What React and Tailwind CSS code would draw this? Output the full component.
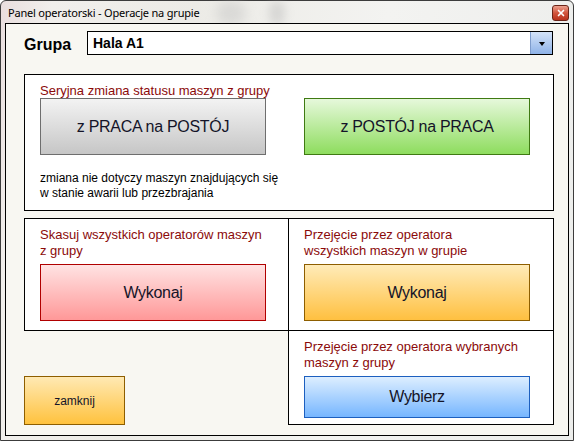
import { X } from 'lucide-react';

function GradButton({ className, children }) {
  return (
    <div className={`flex items-center justify-center border text-[16px] tracking-[-0.3px] text-[#141428] ${className}`}>
      {children}
    </div>
  );
}

export default function App() {
  return (
    <div className="h-[441px] w-[574px] overflow-hidden font-['Liberation_Sans',Arial,sans-serif]">
      <div className="relative flex h-[441px] w-[574px] flex-col rounded-t-[6px] border border-[#3c3c3c] bg-[linear-gradient(100deg,#e9dede_0%,#f1efec_8%,#ecebe6_30%,#f3f3f1_60%,#ecedeb_100%)]">
        <div className="pointer-events-none absolute left-[215px] top-0 h-[24px] w-[30px] rounded-full bg-[#bdbdbd] opacity-40 blur-[6px]" />
        <div className="pointer-events-none absolute left-[268px] top-0 h-[24px] w-[16px] rounded-full bg-[#b4b4b4] opacity-40 blur-[5px]" />
        <div className="relative flex h-[22px] items-start justify-between pl-[7px] pr-[4px]">
          <span className="pt-[5px] font-['Noto_Sans',sans-serif] text-[11px] tracking-[-0.2px] leading-[14px] text-black">
            Panel operatorski - Operacje na grupie
          </span>
          <div className="mt-[4px] flex h-[16px] w-[17px] items-center justify-center rounded-[3px] border border-[#6b2418] bg-[linear-gradient(#eba08f,#d2543c_50%,#b8311c)]">
            <X className="h-[10px] w-[10px] text-white" strokeWidth={4} />
          </div>
        </div>
        <div className="relative mx-[4px] flex h-[413px] w-[564px] flex-col border border-black bg-[#f8f7f2] pl-[18px] pt-[7px]">
          <div className="flex h-[24px] items-center">
            <span className="w-[63px] pt-[3px] text-[16px] font-bold leading-[18px] text-black">Grupa</span>
            <div className="flex h-[24px] w-[466px] border border-black bg-white">
              <span className="flex-1 pl-[5px] pt-[2px] text-[14px] font-bold leading-[18px] text-black">Hala A1</span>
              <div className="flex w-[22px] items-center justify-center border-l border-[#7e9ccc] bg-[linear-gradient(#d4e3f8,#8fb3e8)]">
                <div className="mt-[1px] h-0 w-0 border-x-[3px] border-t-[4px] border-x-transparent border-t-black" />
              </div>
            </div>
          </div>

          <div className="mt-[19px] h-[137px] w-[530px] border border-black bg-white pl-[15px] pt-[8px]">
            <div className="text-[13px] leading-[15px] text-[#8b0a0a]">Seryjna zmiana statusu maszyn z grupy</div>
            <div className="flex gap-[38px]">
              <GradButton className="h-[57px] w-[226px] border-[#6e6e6e] bg-[linear-gradient(#f3f3f3,#c6c6c6)]">
                z PRACA na POSTÓJ
              </GradButton>
              <GradButton className="h-[57px] w-[226px] border-[#3f7a12] bg-[linear-gradient(#e6f8db,#8edd5e)]">
                z POSTÓJ na PRACA
              </GradButton>
            </div>
            <div className="mt-[16px] text-[12px] leading-[15px] text-black">
              zmiana nie dotyczy maszyn znajdujących się
              <br />
              w stanie awarii lub przezbrajania
            </div>
          </div>

          <div className="mt-[7px] flex">
            <div className="flex w-[265px] flex-col">
              <div className="h-[113px] border border-black bg-white pl-[15px] pt-[8px]">
                <div className="text-[13px] leading-[16px] text-[#8b0a0a]">
                  Skasuj wszystkich operatorów maszyn
                  <br />
                  z grupy
                </div>
                <GradButton className="mt-[5px] h-[57px] w-[226px] border-[#b00000] bg-[linear-gradient(#ffe3e3,#ff9898)]">
                  Wykonaj
                </GradButton>
              </div>
              <div className="mt-[45px] flex h-[49px] w-[101px] items-center justify-center border border-[#8e5e00] bg-[linear-gradient(#ffe9b3,#ffc23e)] text-[12px] text-[#141428]">
                zamknij
              </div>
            </div>
            <div className="-ml-px flex h-[207px] w-[266px] flex-col border border-black bg-white">
              <div className="h-[111px] pl-[15px] pt-[8px]">
                <div className="text-[13px] leading-[16px] text-[#8b0a0a]">
                  Przejęcie przez operatora
                  <br />
                  wszystkich maszyn w grupie
                </div>
                <GradButton className="mt-[5px] h-[57px] w-[226px] border-[#8e5e00] bg-[linear-gradient(#ffebb8,#ffc040)]">
                  Wykonaj
                </GradButton>
              </div>
              <div className="flex-1 border-t border-black pl-[15px] pt-[8px]">
                <div className="text-[13px] leading-[16px] text-[#8b0a0a]">
                  Przejęcie przez operatora wybranych
                  <br />
                  maszyn z grupy
                </div>
                <GradButton className="mt-[5px] h-[42px] w-[226px] border-[#1c5fbf] bg-[linear-gradient(#ddeeff,#76b6ff)]">
                  Wybierz
                </GradButton>
              </div>
            </div>
          </div>
        </div>
      </div>
    </div>
  );
}
